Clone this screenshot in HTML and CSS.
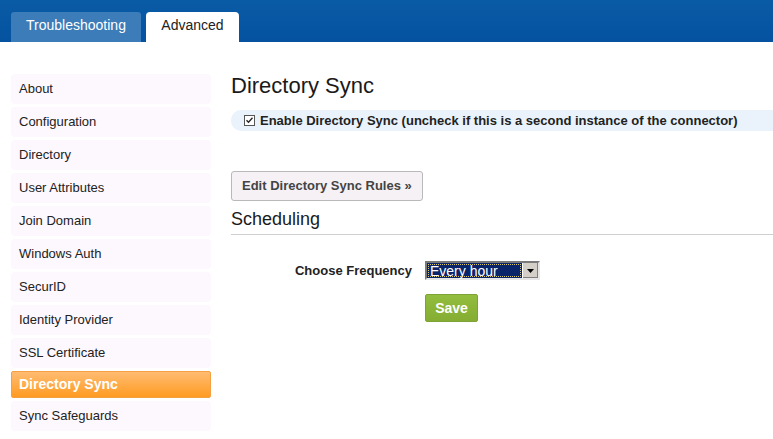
FILE: index.html
```html
<!DOCTYPE html>
<html>
<head>
<meta charset="utf-8">
<link rel="stylesheet" href="styles.css">
</head>
<body>
<div class="header">
  <div class="tab">Troubleshooting</div>
  <div class="tab active">Advanced</div>
</div>
<div class="page">
  <ul class="sidebar">
    <li>About</li>
    <li>Configuration</li>
    <li>Directory</li>
    <li>User Attributes</li>
    <li>Join Domain</li>
    <li>Windows Auth</li>
    <li>SecurID</li>
    <li>Identity Provider</li>
    <li>SSL Certificate</li>
    <li class="current">Directory Sync</li>
    <li>Sync Safeguards</li>
  </ul>
  <div class="main">
    <h1 class="title">Directory Sync</h1>
    <div class="enable-row">
      <span class="check"><svg width="9" height="9" viewBox="0 0 9 9"><path d="M1.5 4.2 L3.5 6.3 L7.5 1.8" fill="none" stroke="#222" stroke-width="1.3"/></svg></span>
      <span class="enable-label">Enable Directory Sync (uncheck if this is a second instance of the connector)</span>
    </div>
    <div class="rules-btn">Edit Directory Sync Rules »</div>
    <h2 class="subtitle">Scheduling</h2>
    <div class="freq-row">
      <span class="freq-label">Choose Frequency</span>
      <div class="select">
        <span class="select-value"><span class="select-text">Every hour</span></span>
        <span class="select-arrow"><svg width="7" height="4" viewBox="0 0 7 4"><path d="M0 0 H7 L3.5 4 Z" fill="#000"/></svg></span>
      </div>
    </div>
    <div class="save-row">
      <div class="save-btn">Save</div>
    </div>
  </div>
</div>
</body>
</html>
```

FILE: styles.css
```css
html, body {
  margin: 0;
  padding: 0;
  background: #fff;
  font-family: "Liberation Sans", Arial, sans-serif;
  font-size: 13px;
  color: #222;
  overflow: hidden;
}
.header {
  height: 42px;
  background: linear-gradient(#0a5ba6, #0452a0);
  display: flex;
  align-items: flex-end;
  gap: 5px;
  padding-left: 11px;
  box-sizing: border-box;
}
.tab {
  height: 30px;
  line-height: 27px;
  font-size: 14px;
  color: #fff;
  background: #3b7cb9;
  border-radius: 3px 3px 0 0;
  width: 130px;
  text-align: center;
}
.tab.active {
  background: #fff;
  color: #222;
  width: 93px;
  border-radius: 4px 4px 0 0;
}
.page {
  display: flex;
  gap: 20px;
  padding-left: 11px;
}
.sidebar {
  list-style: none;
  margin: 32px 0 0 0;
  padding: 0;
  width: 200px;
  display: flex;
  flex-direction: column;
  gap: 3px;
}
.sidebar li {
  height: 30px;
  line-height: 30px;
  padding-left: 8px;
  background: #fdf8fd;
  border-radius: 4px;
}
.sidebar li.current {
  height: 25px;
  line-height: 25px;
  background: linear-gradient(#ffbc72, #ff9b22);
  border: 1px solid #f5a040;
  border-radius: 2px;
  color: #fff;
  font-weight: bold;
  font-size: 14px;
  padding-left: 7px;
}
.main {
  flex: 1;
  min-width: 0;
}
.title {
  margin: 31px 0 0 0;
  font-size: 22px;
  font-weight: normal;
  line-height: 26px;
  color: #1a1a1a;
}
.enable-row {
  margin-top: 11px;
  height: 21px;
  background: #eaf3fc;
  border-radius: 10px 0 0 10px;
  display: flex;
  align-items: center;
  padding-left: 13px;
}
.check {
  width: 9px;
  height: 9px;
  border: 1px solid #555;
  background: #fff;
  display: flex;
  align-items: center;
  justify-content: center;
  margin-right: 5px;
}
.enable-label {
  font-weight: bold;
  color: #222;
}
.rules-btn {
  margin-top: 40px;
  display: inline-block;
  box-sizing: border-box;
  height: 30px;
  line-height: 28px;
  padding: 0 10px;
  width: 192px;
  border: 1px solid #b9b9b9;
  border-radius: 3px;
  background: #f5f1f5;
  color: #444;
  font-weight: bold;
}
.subtitle {
  margin: 7px 0 0 0;
  font-size: 18px;
  font-weight: normal;
  line-height: 22px;
  color: #1a1a1a;
  padding-bottom: 4px;
  border-bottom: 1px solid #cfcfcf;
}
.freq-row {
  margin-top: 26px;
  display: flex;
  align-items: center;
}
.freq-label {
  width: 181px;
  text-align: right;
  font-weight: bold;
  color: #222;
  margin-right: 13px;
}
.select {
  width: 115px;
  height: 19px;
  box-sizing: border-box;
  border: 2px solid;
  border-color: #7a7a7a #e6e6e6 #e6e6e6 #7a7a7a;
  display: flex;
  background: #fff;
}
.select-value {
  flex: 1;
  background: #0a246a;
  padding: 1px;
  display: flex;
}
.select-text {
  flex: 1;
  border: 1px dotted #d8c870;
  color: #fff;
  font-size: 14px;
  line-height: 12px;
  padding-left: 1px;
}
.select-arrow {
  width: 15px;
  background: #d4d0c8;
  border-left: 1px solid #fff;
  box-shadow: inset -1px -1px 0 #808080;
  display: flex;
  align-items: center;
  justify-content: center;
}
.save-row {
  margin-top: 14px;
  padding-left: 194px;
}
.save-btn {
  display: inline-block;
  box-sizing: border-box;
  width: 53px;
  height: 28px;
  line-height: 27px;
  text-align: center;
  background: linear-gradient(#93bd3e, #84ad32);
  border: 1px solid #7da235;
  border-radius: 2px;
  color: #fff;
  font-weight: bold;
  font-size: 14px;
}
```
